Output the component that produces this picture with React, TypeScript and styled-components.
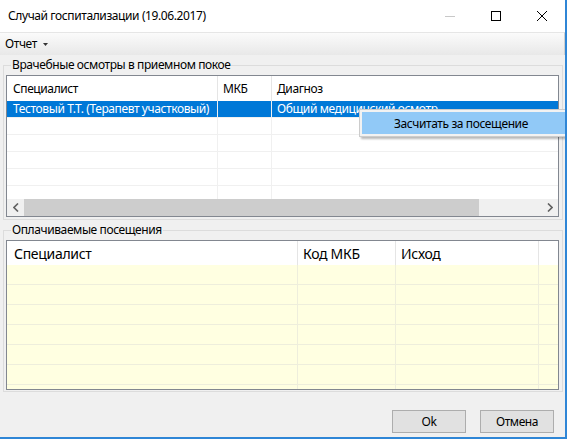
import React from "react";
import styled, { createGlobalStyle } from "styled-components";

const GlobalStyle = createGlobalStyle`
  html, body {
    margin: 0;
    padding: 0;
    width: 567px;
    height: 439px;
    overflow: hidden;
    background: #f0f0f0;
  }
  body {
    font-family: "Noto Sans", "Liberation Sans", sans-serif;
    font-size: 12px;
    letter-spacing: -0.4px;
    color: #000;
  }
  * { box-sizing: border-box; }
`;

const Window = styled.div`
  position: relative;
  width: 567px;
  height: 439px;
  border-right: 2px solid #2f86d6;
  border-bottom: 2px solid #2f86d6;
  background: #f0f0f0;
  display: flex;
  flex-direction: column;
  overflow: hidden;
`;

const TitleBar = styled.div`
  height: 32px;
  background: #ffffff;
  display: flex;
  align-items: center;
  padding-left: 8px;
  flex: none;
`;

const Title = styled.div`
  flex: 1;
  font-size: 12px;
  line-height: 16px;
`;

const CtrlButton = styled.div`
  width: 46px;
  height: 32px;
  display: flex;
  align-items: center;
  justify-content: center;
`;

const MenuBar = styled.div`
  height: 23px;
  flex: none;
  display: flex;
  align-items: center;
  padding-left: 5px;
  background: linear-gradient(#fbfbfb, #e8e8e8);
  border-top: 1px solid #e6e6e6;
  border-right: 1px solid #d0d0d0;
`;

const MenuItem = styled.div`
  display: flex;
  align-items: center;
  gap: 6px;
  font-size: 12px;
  line-height: 16px;
`;

const Content = styled.div`
  padding: 2px 2px 0 3px;
  display: flex;
  flex-direction: column;
  gap: 2px;
`;

const Group = styled.fieldset<{ $pb: number }>`
  margin: 0;
  width: 560px;
  min-width: 0;
  padding: 2px 3px ${(p) => p.$pb}px 2px;
  border: 1px solid #dcdcdc;
`;

const Legend = styled.legend`
  padding: 0 1px;
  margin-left: 5px;
  font-size: 12px;
  line-height: 16px;
`;

const ListView = styled.div`
  width: 553px;
  border: 1px solid #828790;
  background: #ffffff;
  display: flex;
  flex-direction: column;
`;

const Header = styled.div<{ $h: number }>`
  height: ${(p) => p.$h}px;
  display: flex;
  background: #ffffff;
  flex: none;
`;

const HeaderCell = styled.div<{ $w?: number; $pl: number; $fs: number }>`
  ${(p) => (p.$w ? `width: ${p.$w}px; flex: none;` : "flex: 1;")}
  border-right: ${(p) => (p.$w ? "1px solid #e5e5e5" : "none")};
  padding-left: ${(p) => p.$pl}px;
  font-size: ${(p) => p.$fs}px;
  letter-spacing: ${(p) => (p.$fs > 12 ? "-0.3px" : "-0.4px")};
  display: flex;
  align-items: center;
  white-space: nowrap;
  overflow: hidden;
`;

const Rows = styled.div<{ $h: number }>`
  height: ${(p) => p.$h}px;
  overflow: hidden;
  flex: none;
`;

const Row = styled.div<{ $h: number; $bg: string; $line: string; $selected?: boolean }>`
  height: ${(p) => p.$h}px;
  display: flex;
  background: ${(p) => p.$bg};
  color: ${(p) => (p.$selected ? "#ffffff" : "#000")};
  border-bottom: 1px solid ${(p) => p.$line};
  flex: none;
`;

const Cell = styled.div<{ $w?: number; $pl: number; $line: string }>`
  ${(p) => (p.$w ? `width: ${p.$w}px; flex: none;` : "flex: 1;")}
  border-right: ${(p) => (p.$w ? `1px solid ${p.$line}` : "none")};
  padding-left: ${(p) => p.$pl}px;
  font-size: 12px;
  line-height: 16px;
  white-space: nowrap;
  overflow: hidden;
`;

const ScrollBar = styled.div`
  height: 17px;
  display: flex;
  background: #f0f0f0;
  flex: none;
`;

const ScrollArrow = styled.div`
  width: 17px;
  flex: none;
  display: flex;
  align-items: center;
  justify-content: center;
`;

const Track = styled.div`
  flex: 1;
  display: flex;
  align-items: stretch;
`;

const Thumb = styled.div`
  width: 455px;
  background: #cdcdcd;
`;

const Footer = styled.div`
  display: flex;
  justify-content: flex-end;
  gap: 14px;
  padding: 18px 11px 0 0;
`;

const Button = styled.div`
  width: 74px;
  height: 23px;
  background: #e1e1e1;
  border: 1px solid #adadad;
  display: flex;
  align-items: center;
  justify-content: center;
  font-size: 12px;
`;

const ContextMenu = styled.div`
  position: absolute;
  left: 359px;
  top: 109px;
  width: 230px;
  padding: 2px;
  background: #f2f2f2;
  border: 1px solid #cccccc;
  box-shadow: 2px 2px 2px rgba(0, 0, 0, 0.28);
`;

const ContextItem = styled.div`
  height: 22px;
  background: #91c9f7;
  padding-left: 32px;
  display: flex;
  align-items: center;
  font-size: 12px;
`;

const lines1 = [
  { name: "Тестовый Т.Т. (Терапевт участковый)", mkb: "", diag: "Общий медицинский осмотр", selected: true },
  { name: "", mkb: "", diag: "" },
  { name: "", mkb: "", diag: "" },
  { name: "", mkb: "", diag: "" },
  { name: "", mkb: "", diag: "" },
  { name: "", mkb: "", diag: "" },
];

const App: React.FC = () => {
  return (
    <>
      <GlobalStyle />
      <Window>
        <TitleBar>
          <Title>Случай госпитализации (19.06.2017)</Title>
          <CtrlButton>
            <svg width="10" height="10" viewBox="0 0 10 10">
              <line x1="0" y1="5.5" x2="10" y2="5.5" stroke="#c8c8c8" strokeWidth="1" />
            </svg>
          </CtrlButton>
          <CtrlButton>
            <svg width="10" height="10" viewBox="0 0 10 10">
              <rect x="0.5" y="0.5" width="9" height="9" fill="none" stroke="#000" strokeWidth="1" />
            </svg>
          </CtrlButton>
          <CtrlButton>
            <svg width="10" height="10" viewBox="0 0 10 10">
              <path d="M0 0 L10 10 M10 0 L0 10" stroke="#000" strokeWidth="1" />
            </svg>
          </CtrlButton>
        </TitleBar>
        <MenuBar>
          <MenuItem>
            Отчет
            <svg width="5" height="3" viewBox="0 0 5 3">
              <path d="M0 0 L5 0 L2.5 3 Z" fill="#333" />
            </svg>
          </MenuItem>
        </MenuBar>
        <Content>
          <Group $pb={2}>
            <Legend>Врачебные осмотры в приемном покое</Legend>
            <ListView>
              <Header $h={25}>
                <HeaderCell $w={211} $pl={6} $fs={12}>Специалист</HeaderCell>
                <HeaderCell $w={54} $pl={5} $fs={12}>МКБ</HeaderCell>
                <HeaderCell $pl={5} $fs={12}>Диагноз</HeaderCell>
              </Header>
              <Rows $h={98}>
                {lines1.map((r, i) => (
                  <Row
                    key={i}
                    $h={17}
                    $bg={r.selected ? "#0078d7" : "#ffffff"}
                    $line="#f0f0f0"
                    $selected={r.selected}
                  >
                    <Cell $w={211} $pl={6} $line="#f0f0f0">{r.name}</Cell>
                    <Cell $w={54} $pl={5} $line="#f0f0f0">{r.mkb}</Cell>
                    <Cell $pl={5} $line="#f0f0f0">{r.diag}</Cell>
                  </Row>
                ))}
              </Rows>
              <ScrollBar>
                <ScrollArrow>
                  <svg width="6" height="9" viewBox="0 0 6 9">
                    <path d="M5 0.5 L1 4.5 L5 8.5" fill="none" stroke="#606060" strokeWidth="1.6" />
                  </svg>
                </ScrollArrow>
                <Track>
                  <Thumb />
                </Track>
                <ScrollArrow>
                  <svg width="6" height="9" viewBox="0 0 6 9">
                    <path d="M1 0.5 L5 4.5 L1 8.5" fill="none" stroke="#606060" strokeWidth="1.6" />
                  </svg>
                </ScrollArrow>
              </ScrollBar>
            </ListView>
          </Group>
          <Group $pb={1}>
            <Legend>Оплачиваемые посещения</Legend>
            <ListView>
              <Header $h={24}>
                <HeaderCell $w={291} $pl={7} $fs={14}>Специалист</HeaderCell>
                <HeaderCell $w={98} $pl={5} $fs={14}>Код МКБ</HeaderCell>
                <HeaderCell $w={143} $pl={5} $fs={14}>Исход</HeaderCell>
                <HeaderCell $pl={5} $fs={14}></HeaderCell>
              </Header>
              <Rows $h={124}>
                {Array.from({ length: 7 }).map((_, i) => (
                  <Row key={i} $h={20} $bg="#ffffe1" $line="#eeeedc">
                    <Cell $w={291} $pl={7} $line="#eeeedc" />
                    <Cell $w={98} $pl={5} $line="#eeeedc" />
                    <Cell $w={143} $pl={5} $line="#eeeedc" />
                    <Cell $pl={5} $line="#eeeedc" />
                  </Row>
                ))}
              </Rows>
            </ListView>
          </Group>
        </Content>
        <Footer>
          <Button>Ok</Button>
          <Button>Отмена</Button>
        </Footer>
        <ContextMenu>
          <ContextItem>Засчитать за посещение</ContextItem>
        </ContextMenu>
      </Window>
    </>
  );
};

export default App;
